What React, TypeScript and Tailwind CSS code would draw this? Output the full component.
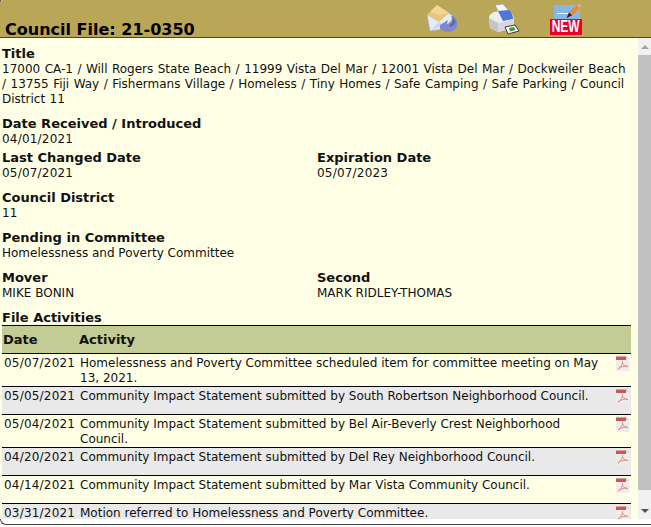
const rows = [
  { date: '05/07/2021', text: 'Homelessness and Poverty Committee scheduled item for committee meeting on May 13, 2021.', h: 'h-[33px]', alt: false },
  { date: '05/05/2021', text: 'Community Impact Statement submitted by South Robertson Neighborhood Council.', h: 'h-[28px]', alt: true },
  { date: '05/04/2021', text: 'Community Impact Statement submitted by Bel Air-Beverly Crest Neighborhood Council.', h: 'h-[33px]', alt: false },
  { date: '04/20/2021', text: 'Community Impact Statement submitted by Del Rey Neighborhood Council.', h: 'h-[28px]', alt: true },
  { date: '04/14/2021', text: 'Community Impact Statement submitted by Mar Vista Community Council.', h: 'h-[28px]', alt: false },
  { date: '03/31/2021', text: 'Motion referred to Homelessness and Poverty Committee.', h: 'h-[28px]', alt: true },
];

function PdfIcon() {
  return (
    <svg width="15" height="16" viewBox="0 0 15 16" className="shrink-0">
      <path d="M1 0H10.5L14.5 4V16H1Z" fill="#f0ecea" />
      <path d="M10.5 0L14.5 4H10.5Z" fill="#d9d5d2" />
      <rect x="1" y="1.5" width="10" height="3.5" fill="#c25a58" />
      <path d="M3 14C6 12 8 8.5 7.5 6.5C7 9 9.5 11 13 11.5C9.5 10.5 6 11.5 3 14Z" fill="none" stroke="#dc8a88" strokeWidth="1" />
    </svg>
  );
}

function Field({ label, value, className, valueClass }: { label: string; value: string; className?: string; valueClass?: string }) {
  return (
    <div className={className}>
      <div className="font-bold text-[13px] leading-[16px]">{label}</div>
      <div className={`leading-[15px] ${valueClass ?? ''}`}>{value}</div>
    </div>
  );
}

function HeaderIcons() {
  return (
    <div className="flex items-start gap-[30px] pt-[3px] pr-[69px]">
      <svg width="32" height="31" viewBox="0 0 32 31">
        <path d="M0 12L3 28L17 26L27 14L22 10Z" fill="#e4ecfa" stroke="#9eaad2" strokeWidth="0.7" />
        <path d="M0 12L10 2L22 10L12 19Z" fill="#e8c67c" />
        <path d="M10 2L22 10L12 12L3 9Z" fill="#f0d697" />
        <path d="M3 28L12 19L17 22Z" fill="#cbd6f0" />
        <path d="M13 26C20 31 28 29 30 23C31 19 29 15 26 13L24 13C27 17 25 21 20 21L21 17L13 22Z" fill="#7f86d4" />
        <path d="M24 14C27 17 26 21 22 22L23 24C27 23 29 20 28 17Z" fill="#5e64bc" />
      </svg>
      <svg width="31" height="32" viewBox="0 0 31 32">
        <path d="M6 2L14 1L20 8L11 12Z" fill="#f4f6fc" stroke="#8f96ae" strokeWidth="0.6" />
        <path d="M0 14C1 10 6 8 12 8L20 8C23 10 25 13 25 17L25 25L9 29L1 25Z" fill="#eceded" />
        <path d="M0 15L9 20L9 29L1 25Z" fill="#c4c6ce" />
        <path d="M9 8L20 7C23 10 24 13 24 16L14 18Z" fill="#4e76d6" />
        <path d="M9 20L25 16L25 25L9 29Z" fill="#d5d7de" />
        <path d="M16 24L26 22L30 28L19 31Z" fill="#f6f8f0" stroke="#2b2b2b" strokeWidth="0.9" />
        <path d="M20 25L25 24L26.5 27L21 28.5Z" fill="#3d9a46" />
      </svg>
      <div className="relative w-[32px] h-[32px]">
        <div className="absolute left-[4px] top-[2px] w-[26px] h-[15px] bg-[#86b8e4]" />
        <div className="absolute left-[7px] top-[10px] w-[13px] h-px bg-white" />
        <svg width="16" height="16" viewBox="0 0 16 16" className="absolute left-[16px] top-0">
          <path d="M2 13L3 9.5L11 2L14 5L6 12.5Z" fill="#ea8a2a" />
          <path d="M11 2L13 0.5L15.5 3L14 5Z" fill="#e3a5ab" />
          <path d="M0.5 15L3 9.5L6 12.5Z" fill="#222" />
        </svg>
        <div className="absolute left-0 top-[16px] w-[32px] h-[16px] bg-[#e8002a] flex justify-center text-white font-bold text-[16px] leading-[16px] font-['Liberation_Sans',sans-serif]">
          <span className="inline-block scale-x-75">NEW</span>
        </div>
      </div>
    </div>
  );
}

export default function App() {
  return (
    <div className="h-[527px] w-[651px] overflow-hidden bg-white font-['DejaVu_Sans',sans-serif] text-[12px] text-[#111]">
      <div className="h-[525px] border-b border-l border-[#444] rounded-bl-[6px]">
        <div className="h-[519px] -ml-px flex flex-col overflow-hidden">
          <div className="h-[38px] shrink-0 bg-[#b9a656] border-b border-[#444] rounded-tl-[3px] flex items-start justify-between">
            <h1 className="pl-[5px] pt-[20px] font-bold text-[16px] leading-[19px] text-black">Council File: 21-0350</h1>
            <HeaderIcons />
          </div>
          <div className="flex-1 flex min-h-0">
            <div className="flex-1 min-w-0 bg-[#ffffe6] pl-[2px] pt-[8px] pr-[7px]">
              <Field label="Title" valueClass="[word-spacing:0.65px]" value="17000 CA-1 / Will Rogers State Beach / 11999 Vista Del Mar / 12001 Vista Del Mar / Dockweiler Beach / 13755 Fiji Way / Fishermans Village / Homeless / Tiny Homes / Safe Camping / Safe Parking / Council District 11" />
              <Field className="mt-[9px]" label="Date Received / Introduced" value="04/01/2021" valueClass="tracking-[0.2px]" />
              <div className="mt-[3px] grid grid-cols-[315px_1fr]">
                <Field label="Last Changed Date" value="05/07/2021" valueClass="tracking-[0.2px]" />
                <Field label="Expiration Date" value="05/07/2023" valueClass="tracking-[0.2px]" />
              </div>
              <Field className="mt-[9px]" label="Council District" value="11" />
              <Field className="mt-[9px]" label="Pending in Committee" value="Homelessness and Poverty Committee" />
              <div className="mt-[9px] grid grid-cols-[315px_1fr]">
                <Field label="Mover" value="MIKE BONIN" />
                <Field label="Second" value="MARK RIDLEY-THOMAS" />
              </div>
              <div className="mt-[9px] font-bold text-[13px] leading-[15px]">File Activities</div>
              <div className="flex h-[29px] items-center bg-[#c3cc94] border-y border-black font-bold text-[13px]">
                <div className="w-[77px] pl-[1px]">Date</div>
                <div>Activity</div>
              </div>
              {rows.map((r) => (
                <div key={r.date} className={`flex items-start border-b border-black pt-[1px] ${r.h} ${r.alt ? 'bg-[#e9e9e9]' : ''}`}>
                  <div className="w-[78px] shrink-0 pl-[2px] pt-[1px] leading-[15px] tracking-[0.2px]">{r.date}</div>
                  <div className="flex-1 pt-[1px] leading-[15px]">{r.text}</div>
                  <div className="w-[21px] shrink-0 pl-[5px]"><PdfIcon /></div>
                </div>
              ))}
            </div>
            <div className="w-[13px] shrink-0 bg-[#f1f1f1] flex flex-col items-center">
              <div className="h-[17px] flex items-center justify-center">
                <div className="w-0 h-0 border-x-[4px] border-x-transparent border-b-[4px] border-b-[#a3a3a3]" />
              </div>
              <div className="w-full h-[435px] bg-[#c1c1c1]" />
              <div className="flex-1" />
              <div className="h-[17px] flex items-center justify-center">
                <div className="w-0 h-0 border-x-[4px] border-x-transparent border-t-[4px] border-t-[#505050]" />
              </div>
            </div>
          </div>
        </div>
      </div>
    </div>
  );
}
